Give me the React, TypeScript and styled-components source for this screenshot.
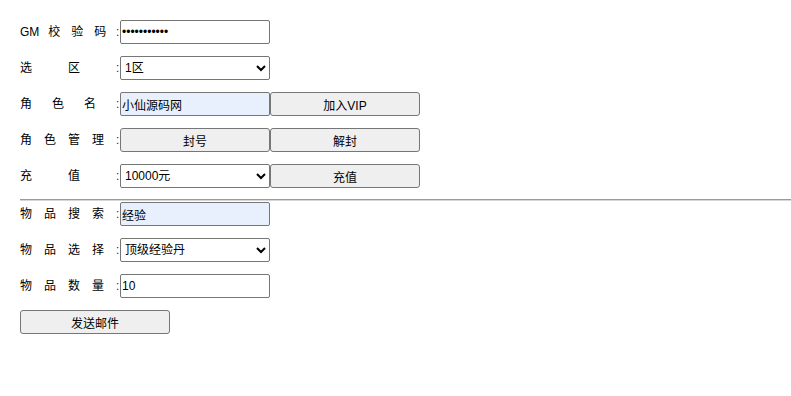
import React from "react";
import styled, { createGlobalStyle } from "styled-components";

const Global = createGlobalStyle`
  html, body { margin: 0; padding: 0; background: #fff; }
  body {
    font-family: "Liberation Sans", "Noto Sans CJK SC", sans-serif;
    font-size: 12px;
    color: #000;
  }
`;

const Page = styled.div`
  padding: 20px 0 0 20px;
  width: 771px;
`;

const Row = styled.div<{ $last?: boolean }>`
  display: flex;
  align-items: center;
  height: 24px;
  margin-bottom: ${(p) => (p.$last ? 0 : 12)}px;
`;

const Label = styled.span<{ $spacing: number }>`
  display: inline-block;
  width: 96px;
  white-space: nowrap;
  letter-spacing: ${(p) => p.$spacing}px;
  font-size: 12px;
  line-height: 24px;
`;

const Tight = styled.span`
  letter-spacing: 0;
  margin-right: 9px;
`;

const Colon = styled.span`
  display: inline-block;
  width: 4px;
  color: #800000;
  font-size: 12px;
  line-height: 24px;
`;

const TextInput = styled.input<{ $filled?: boolean }>`
  box-sizing: border-box;
  width: 150px;
  height: 24px;
  margin: 0;
  padding: 1px 1px;
  border: 1px solid #767676;
  border-radius: 2px;
  background: ${(p) => (p.$filled ? "#e8f0fe" : "#fff")};
  font-family: "Liberation Sans", "Noto Sans CJK SC", sans-serif;
  font-size: 12px;
  color: #000;
  outline: none;
`;

const Select = styled.select`
  box-sizing: border-box;
  width: 150px;
  height: 24px;
  margin: 0;
  border: 1px solid #767676;
  border-radius: 2px;
  background: #fff;
  font-family: "Liberation Sans", "Noto Sans CJK SC", sans-serif;
  font-size: 12px;
  color: #000;
`;

const Button = styled.button`
  box-sizing: border-box;
  width: 150px;
  height: 24px;
  margin: 0;
  padding: 0;
  border: 1px solid #767676;
  border-radius: 3px;
  background: #efefef;
  font-family: "Liberation Sans", "Noto Sans CJK SC", sans-serif;
  font-size: 12px;
  color: #000;
`;

const Divider = styled.hr`
  margin: 11px 0 1px 0;
  height: 0;
  border: none;
  border-top: 1px solid #9a9a9a;
  border-bottom: 1px solid #d6d6d6;
`;

export default function App() {
  return (
    <>
      <Global />
      <Page>
        <Row>
          <Label $spacing={11}>
            <Tight>GM</Tight>校验码
          </Label>
          <Colon>:</Colon>
          <TextInput type="password" defaultValue="12345678901" />
        </Row>
        <Row>
          <Label $spacing={36}>选区</Label>
          <Colon>:</Colon>
          <Select defaultValue="1区">
            <option>1区</option>
            <option>2区</option>
          </Select>
        </Row>
        <Row>
          <Label $spacing={20}>角色名</Label>
          <Colon>:</Colon>
          <TextInput $filled defaultValue="小仙源码网" />
          <Button>加入VIP</Button>
        </Row>
        <Row>
          <Label $spacing={12}>角色管理</Label>
          <Colon>:</Colon>
          <Button>封号</Button>
          <Button>解封</Button>
        </Row>
        <Row $last>
          <Label $spacing={36}>充值</Label>
          <Colon>:</Colon>
          <Select defaultValue="10000元">
            <option>10000元</option>
            <option>5000元</option>
          </Select>
          <Button>充值</Button>
        </Row>
        <Divider />
        <Row>
          <Label $spacing={12}>物品搜索</Label>
          <Colon>:</Colon>
          <TextInput $filled defaultValue="经验" />
        </Row>
        <Row>
          <Label $spacing={12}>物品选择</Label>
          <Colon>:</Colon>
          <Select defaultValue="顶级经验丹">
            <option>顶级经验丹</option>
            <option>经验丹</option>
          </Select>
        </Row>
        <Row>
          <Label $spacing={12}>物品数量</Label>
          <Colon>:</Colon>
          <TextInput defaultValue="10" />
        </Row>
        <Row>
          <Button>发送邮件</Button>
        </Row>
      </Page>
    </>
  );
}
